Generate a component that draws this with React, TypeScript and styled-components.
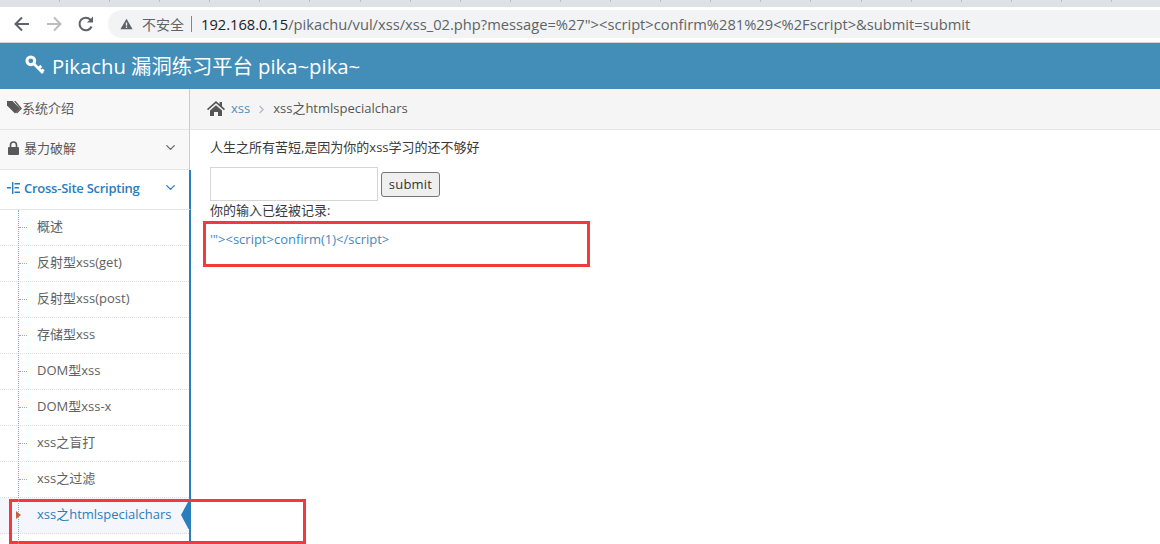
import styled, { createGlobalStyle } from "styled-components";
import { ChevronDown, ChevronRight } from "lucide-react";

const Global = createGlobalStyle`
  html, body { margin: 0; padding: 0; height: 100%; background: #fff; overflow: hidden; }
  body { font-family: "Open Sans", "Noto Sans CJK SC", sans-serif; font-size: 13px; color: #393939; }
`;

const Page = styled.div`
  position: relative;
  width: 1160px;
  height: 544px;
  overflow: hidden;
`;

const TabStrip = styled.div`
  height: 7px;
  background: #dee1e6;
  display: flex;
  padding-left: 59px;
  gap: 49.1px;
`;

const TabTick = styled.span`
  width: 1px;
  height: 2px;
  background: #b9bcc2;
`;

const Toolbar = styled.div`
  height: 36px;
  box-sizing: border-box;
  background: #fff;
  border-bottom: 1px solid #d3d5d9;
  display: flex;
  align-items: center;
  padding: 0 0 1px 13px;
`;

const NavIcon = styled.svg`
  width: 18px;
  height: 18px;
  margin-right: 14px;
  flex: none;
`;

const AddressBar = styled.div`
  margin-left: -1px;
  flex: 1;
  height: 28px;
  background: #f1f3f4;
  border-radius: 14px 0 0 14px;
  display: flex;
  align-items: center;
  padding-left: 12px;
  font-family: "Noto Sans CJK SC", "Open Sans", sans-serif;
  font-size: 14px;
  color: #5f6368;
`;

const WarningIcon = styled.svg`
  width: 13px;
  height: 12px;
  margin-right: 9px;
  flex: none;
`;

const Divider = styled.span`
  width: 1px;
  height: 16px;
  background: #80868b;
  margin: 0 9px 0 7px;
`;

const Url = styled.span`
  font-family: "Open Sans", sans-serif;
  font-size: 14.7px;
  white-space: nowrap;
  color: #5f6368;
`;

const UrlHost = styled.span`
  color: #202124;
`;

const Header = styled.header`
  height: 46px;
  box-sizing: border-box;
  background: #438eb9;
  color: #fff;
  display: flex;
  align-items: center;
  padding: 0 0 3px 25px;
  font-size: 20.3px;
  gap: 7px;
`;

const Body = styled.div`
  display: flex;
  height: 455px;
`;

const Sidebar = styled.nav`
  width: 190px;
  flex: none;
  box-sizing: border-box;
  background: #fff;
`;

const MenuItem = styled.div<{ $active?: boolean; $h: number }>`
  height: ${(p) => p.$h}px;
  box-sizing: border-box;
  background: ${(p) => (p.$active ? "#fff" : "#f8f8f8")};
  color: ${(p) => (p.$active ? "#2b7dbc" : "#585858")};
  font-weight: ${(p) => (p.$active ? 600 : 400)};
  letter-spacing: ${(p) => (p.$active ? "-0.25px" : "0")};
  border-bottom: 1px solid #e5e5e5;
  border-right: ${(p) => (p.$active ? "2px solid #2b7dbc" : "1px solid #ccc")};
  margin-right: ${(p) => (p.$active ? "-1px" : "0")};
  display: flex;
  align-items: center;
  padding: 0 11px 4px 7px;
  gap: 3px;
  svg.icon { flex: none; }
`;

const MenuLabel = styled.span<{ $shift?: number }>`
  flex: 1;
  white-space: nowrap;
  margin-left: ${(p) => p.$shift || 0}px;
`;

const SubMenu = styled.ul`
  list-style: none;
  margin: 0 -1px 0 0;
  padding: 0;
  position: relative;
  border-right: 2px solid #2b7dbc;
  &::before {
    content: "";
    position: absolute;
    z-index: 1;
    left: 18px;
    top: 0;
    bottom: 0;
    border-left: 1px dotted #7eb3d8;
  }
`;

const SubItem = styled.li<{ $active?: boolean }>`
  position: relative;
  height: 36px;
  box-sizing: border-box;
  padding: 0 0 5px 37px;
  display: flex;
  align-items: center;
  border-bottom: 1px dotted #dcdcdc;
  background: ${(p) => (p.$active ? "#f5f6fb" : "#fff")};
  color: ${(p) => (p.$active ? "#2b7dbc" : "#616161")};
  white-space: nowrap;
  &::before {
    content: "";
    position: absolute;
    left: 19px;
    top: 17px;
    width: 8px;
    border-top: 1px dotted #7eb3d8;
    display: ${(p) => (p.$active ? "none" : "block")};
  }
`;

const ActiveCaret = styled.span`
  position: absolute;
  z-index: 2;
  left: 16px;
  top: 13px;
  border-left: 5px solid #c86139;
  border-top: 4px solid transparent;
  border-bottom: 4px solid transparent;
`;

const ActivePointer = styled.span`
  position: absolute;
  right: -2px;
  top: 3px;
  width: 10px;
  height: 28px;
  background: #2b7dbc;
  clip-path: polygon(100% 0, 100% 100%, 75% 100%, 0 50%, 75% 0);
`;

const Main = styled.main`
  flex: 1;
  min-width: 0;
`;

const Breadcrumbs = styled.div`
  height: 41px;
  box-sizing: border-box;
  background: #f5f5f5;
  border-bottom: 1px solid #e5e5e5;
  display: flex;
  align-items: center;
  padding: 0 0 1px 17px;
  color: #555;
`;

const CrumbText = styled.span`
  position: relative;
  top: -1px;
`;

const CrumbLink = styled(CrumbText)`
  color: #4c8fbd;
  margin-left: 6px;
`;

const CrumbArrow = styled(ChevronRight)`
  margin: 1px 5px 0 5px;
  color: #b2b6bf;
`;

const Content = styled.div`
  padding: 7px 0 0 20px;
  color: #393939;
`;

const Intro = styled.p`
  margin: 0 0 10px;
  line-height: 20px;
  height: 20px;
`;

const Form = styled.form`
  margin: 0;
  display: flex;
  align-items: flex-end;
  height: 34px;
  gap: 3px;
`;

const TextInput = styled.div`
  width: 168px;
  height: 34px;
  box-sizing: border-box;
  border: 1px solid #d5d5d5;
  background: #fff;
`;

const SubmitButton = styled.div`
  width: 59px;
  height: 25px;
  margin-bottom: 4px;
  padding-bottom: 1px;
  box-sizing: border-box;
  border: 1px solid #767676;
  border-radius: 3px;
  background: #efefef;
  color: #333;
  display: flex;
  align-items: center;
  justify-content: center;
  letter-spacing: 0.2px;
`;

const LogLabel = styled.div`
  line-height: 18px;
`;

const Output = styled.div`
  margin-top: 11px;
  line-height: 18px;
  color: #3f88c5;
  font-size: 13px;
`;

const Highlight = styled.div`
  position: absolute;
  box-sizing: border-box;
  border: 3px solid #f23a3c;
  pointer-events: none;
`;

const OutputBox = styled(Highlight)`
  left: 203px;
  top: 221px;
  width: 387px;
  height: 46px;
`;

const MenuBox = styled(Highlight)`
  left: 9px;
  top: 499px;
  width: 297px;
  height: 45px;
`;

const subItems = [
  "概述",
  "反射型xss(get)",
  "反射型xss(post)",
  "存储型xss",
  "DOM型xss",
  "DOM型xss-x",
  "xss之盲打",
  "xss之过滤",
];

export default function App() {
  return (
    <Page>
      <Global />
      <TabStrip>
        {Array.from({ length: 22 }).map((_, i) => (
          <TabTick key={i} />
        ))}
      </TabStrip>
      <Toolbar>
        <NavIcon viewBox="0 0 18 18" fill="none" stroke="#5f6368" strokeWidth="2">
          <path d="M16 9H3M9 2.5L2.5 9 9 15.5" />
        </NavIcon>
        <NavIcon viewBox="0 0 18 18" fill="none" stroke="#babcbe" strokeWidth="2">
          <path d="M2 9h13M9 2.5L15.5 9 9 15.5" />
        </NavIcon>
        <NavIcon viewBox="0 0 18 18" fill="none" stroke="#5f6368" strokeWidth="2">
          <path d="M14.6 11.5A6.3 6.3 0 1 1 13.4 4.6L15 6.2" />
          <path d="M16 1.5v6h-6z" fill="#5f6368" stroke="none" />
        </NavIcon>
        <AddressBar>
          <WarningIcon viewBox="0 0 16 14">
            <path d="M8 0.5L15.5 13.5H0.5z" fill="#5f6368" />
            <path d="M7.2 5h1.6v4.2H7.2zM7.2 10.2h1.6v1.6H7.2z" fill="#f1f3f4" />
          </WarningIcon>
          不安全
          <Divider />
          <Url>
            <UrlHost>192.168.0.15</UrlHost>
            /pikachu/vul/xss/xss_02.php?message=%27"&gt;&lt;script&gt;confirm%281%29&lt;%2Fscript&gt;&amp;submit=submit
          </Url>
        </AddressBar>
      </Toolbar>
      <Header>
        <svg width="20" height="20" viewBox="0 0 20 20" fill="none" stroke="#fff">
          <circle cx="5.8" cy="5.8" r="3.9" strokeWidth="3" />
          <path d="M8.8 8.8L18 18M13.5 13.5l2.8-2.6M16.5 16.5l2.2-2" strokeWidth="2.8" />
        </svg>
        Pikachu 漏洞练习平台 pika~pika~
      </Header>
      <Body>
        <Sidebar>
          <MenuItem $h={41}>
            <svg className="icon" width="15" height="14" viewBox="0 0 15 14" fill="#585858">
              <path d="M0 1h5.5L13 8.5 8 13.5 0 5.5z" />
              <path d="M7 1h1.5L15 8.5l-5 5-1-1 4-4z" />
            </svg>
            <MenuLabel $shift={-3}>系统介绍</MenuLabel>
          </MenuItem>
          <MenuItem $h={40}>
            <svg className="icon" width="13" height="14" viewBox="0 0 13 14" fill="#585858">
              <rect x="1" y="6" width="11" height="8" rx="1" />
              <path d="M3.5 6V4a3 3 0 0 1 6 0v2" fill="none" stroke="#585858" strokeWidth="1.6" />
            </svg>
            <MenuLabel $shift={1}>暴力破解</MenuLabel>
            <ChevronDown size={15} color="#666" />
          </MenuItem>
          <MenuItem $h={40} $active>
            <svg className="icon" width="14" height="14" viewBox="0 0 14 14" fill="#2b7dbc">
              <path d="M5 1h1.4v12H5zM7.5 2H13v1.6H7.5zM7.5 6H12v1.6H7.5zM7.5 10.4H13V12H7.5zM0 6h4v1.6H0z" />
            </svg>
            <MenuLabel>Cross-Site Scripting</MenuLabel>
            <ChevronDown size={15} color="#2b7dbc" />
          </MenuItem>
          <SubMenu>
            {subItems.map((s) => (
              <SubItem key={s}>{s}</SubItem>
            ))}
            <SubItem $active>
              <ActiveCaret />
              xss之htmlspecialchars
              <ActivePointer />
            </SubItem>
            <SubItem />
          </SubMenu>
        </Sidebar>
        <Main>
          <Breadcrumbs>
            <svg width="18" height="15" viewBox="0 0 18 15" fill="#555">
              <path d="M9 0L0 8l1 1.2L9 2.2l8 7L18 8l-3-2.7V1h-2.4v2.2z" />
              <path d="M3 9.5L9 4.2l6 5.3V15h-4v-4H7v4H3z" />
            </svg>
            <CrumbLink>xss</CrumbLink>
            <CrumbArrow size={13} />
            <CrumbText>xss之htmlspecialchars</CrumbText>
          </Breadcrumbs>
          <Content>
            <Intro>人生之所有苦短,是因为你的xss学习的还不够好</Intro>
            <Form>
              <TextInput />
              <SubmitButton>submit</SubmitButton>
            </Form>
            <LogLabel>你的输入已经被记录:</LogLabel>
            <Output>'"&gt;&lt;script&gt;confirm(1)&lt;/script&gt;</Output>
          </Content>
        </Main>
      </Body>
      <OutputBox />
      <MenuBox />
    </Page>
  );
}
